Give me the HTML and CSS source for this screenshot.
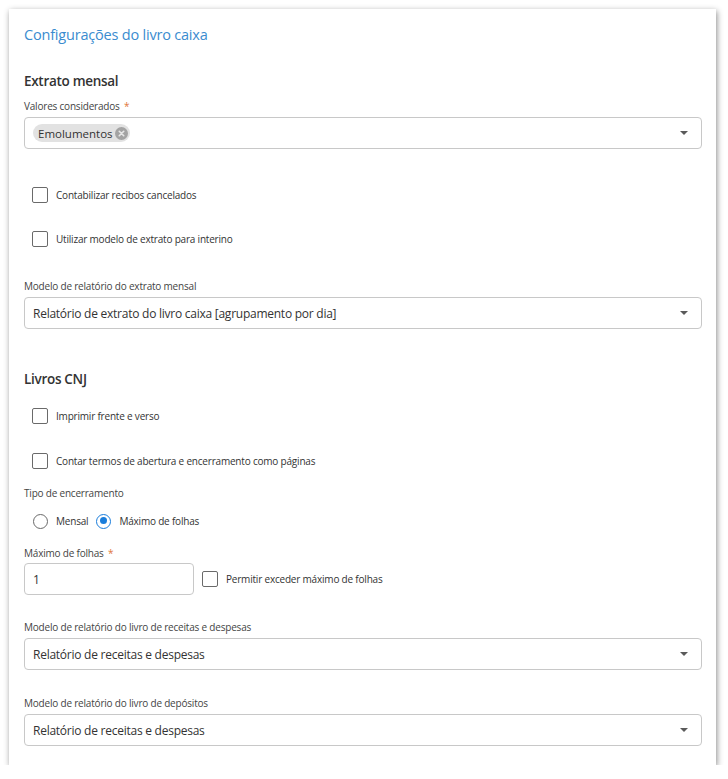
FILE: index.html
```html
<!DOCTYPE html>
<html lang="pt">
<head>
<meta charset="utf-8">
<link rel="stylesheet" href="styles.css">
</head>
<body>
<div class="card">
  <h1 class="title">Configurações do livro caixa</h1>

  <h2 class="section s1">Extrato mensal</h2>
  <label class="label l1">Valores considerados <span class="req">*</span></label>
  <div class="select">
    <div class="chip">Emolumentos
      <svg class="chip-x" viewBox="0 0 14 14" width="13" height="13"><circle cx="7" cy="7" r="7" fill="#a3a3a3"/><path d="M4.6 4.6 9.4 9.4M9.4 4.6 4.6 9.4" stroke="#e6e6e6" stroke-width="1.8" stroke-linecap="round"/></svg>
    </div>
    <span class="arrow"></span>
  </div>

  <div class="check-row c1"><span class="box"></span><span class="clabel">Contabilizar recibos cancelados</span></div>
  <div class="check-row c2"><span class="box"></span><span class="clabel">Utilizar modelo de extrato para interino</span></div>

  <label class="label l2">Modelo de relatório do extrato mensal</label>
  <div class="select"><span class="value">Relatório de extrato do livro caixa [agrupamento por dia]</span><span class="arrow"></span></div>

  <h2 class="section s2">Livros CNJ</h2>
  <div class="check-row c3"><span class="box"></span><span class="clabel">Imprimir frente e verso</span></div>
  <div class="check-row c4"><span class="box"></span><span class="clabel">Contar termos de abertura e encerramento como páginas</span></div>

  <label class="label l3">Tipo de encerramento</label>
  <div class="radio-row">
    <span class="radio"></span><span class="rlabel">Mensal</span>
    <span class="radio on"></span><span class="rlabel">Máximo de folhas</span>
  </div>

  <label class="label l4">Máximo de folhas <span class="req">*</span></label>
  <div class="input-row">
    <div class="input"><span class="value">1</span></div>
    <div class="check-row inline"><span class="box"></span><span class="clabel">Permitir exceder máximo de folhas</span></div>
  </div>

  <label class="label l5">Modelo de relatório do livro de receitas e despesas</label>
  <div class="select"><span class="value">Relatório de receitas e despesas</span><span class="arrow"></span></div>

  <label class="label l6">Modelo de relatório do livro de depósitos</label>
  <div class="select"><span class="value">Relatório de receitas e despesas</span><span class="arrow"></span></div>
</div>
</body>
</html>
```
FILE: styles.css
```css
* { box-sizing: border-box; }
html, body { margin: 0; background: #fff; }
body {
  padding: 9px 12px 0 9px;
  font-family: "Open Sans", "Noto Sans", sans-serif;
  color: #333;
}
.card {
  width: 707px;
  height: 756px;
  background: #fff;
  box-shadow: 1px 2px 6px rgba(0,0,0,0.45);
  padding: 16px 14px 0 15px;
  display: flex;
  flex-direction: column;
}
.title {
  margin: 0;
  font-size: 14.5px;
  letter-spacing: -0.2px;
  line-height: 20px;
  font-weight: 400;
  color: #3a8ccf;
}
.section {
  margin: 0;
  font-size: 13.5px;
  letter-spacing: -0.3px;
  line-height: 20px;
  font-weight: 600;
  color: #333;
}
.s1 { margin-top: 26px; }
.s2 { margin-top: 40px; }
.label {
  display: block;
  font-size: 10px;
  letter-spacing: -0.2px;
  line-height: 16px;
  color: #444;
  margin-bottom: 3px;
}
.l1 { margin-top: 7px; }
.l2 { margin-top: 29px; }
.l3 { margin-top: 14px; }
.l4 { margin-top: 14px; margin-bottom: 2px; }
.l5 { margin-top: 24px; }
.l6 { margin-top: 25px; }
.req { color: #e0763a; margin-left: 2px; }
.select, .input {
  height: 32px;
  border: 1px solid #c8c8c8;
  border-radius: 4px;
  display: flex;
  align-items: center;
  padding: 0 13px 0 8px;
  position: relative;
  flex-shrink: 0;
}
.select .value, .input .value {
  font-size: 12px;
  letter-spacing: -0.25px;
  color: #333;
  flex: 1;
}
.arrow {
  width: 0; height: 0;
  border-left: 4.5px solid transparent;
  border-right: 4.5px solid transparent;
  border-top: 4.5px solid #5a5a5a;
  margin-left: auto;
}
.chip {
  display: flex;
  align-items: center;
  height: 18px;
  background: #e2e2e2;
  border-radius: 9px;
  padding: 0 2px 0 5px;
  font-size: 11.5px;
  color: #333;
  gap: 2px;
}
.chip-x { display: block; }
.check-row {
  display: flex;
  align-items: center;
  height: 20px;
  padding-left: 8px;
}
.c1 { margin-top: 36px; }
.c2 { margin-top: 24px; }
.c3 { margin-top: 17px; }
.c4 { margin-top: 25px; }
.box {
  width: 16px; height: 16px;
  border: 1.5px solid #6a6a6a;
  border-radius: 2px;
  flex-shrink: 0;
}
.clabel {
  margin-left: 8px;
  font-size: 10px;
  letter-spacing: -0.2px;
  color: #333;
}
.radio-row {
  display: flex;
  align-items: center;
  height: 20px;
  margin-top: 7px;
  padding-left: 9px;
}
.radio {
  width: 15px; height: 15px;
  border: 1.5px solid #6a6a6a;
  border-radius: 50%;
  flex-shrink: 0;
  position: relative;
}
.radio.on { border-color: #1a7ddb; margin-left: 8px; }
.radio.on::after {
  content: "";
  position: absolute;
  left: 2.5px; top: 2.5px;
  width: 7px; height: 7px;
  border-radius: 50%;
  background: #1a7ddb;
}
.rlabel { font-size: 10px; letter-spacing: -0.2px; margin-left: 8px; color: #333; }
.input-row {
  display: flex;
  align-items: center;
}
.input { width: 170px; }
.check-row.inline { padding-left: 8px; }
```
